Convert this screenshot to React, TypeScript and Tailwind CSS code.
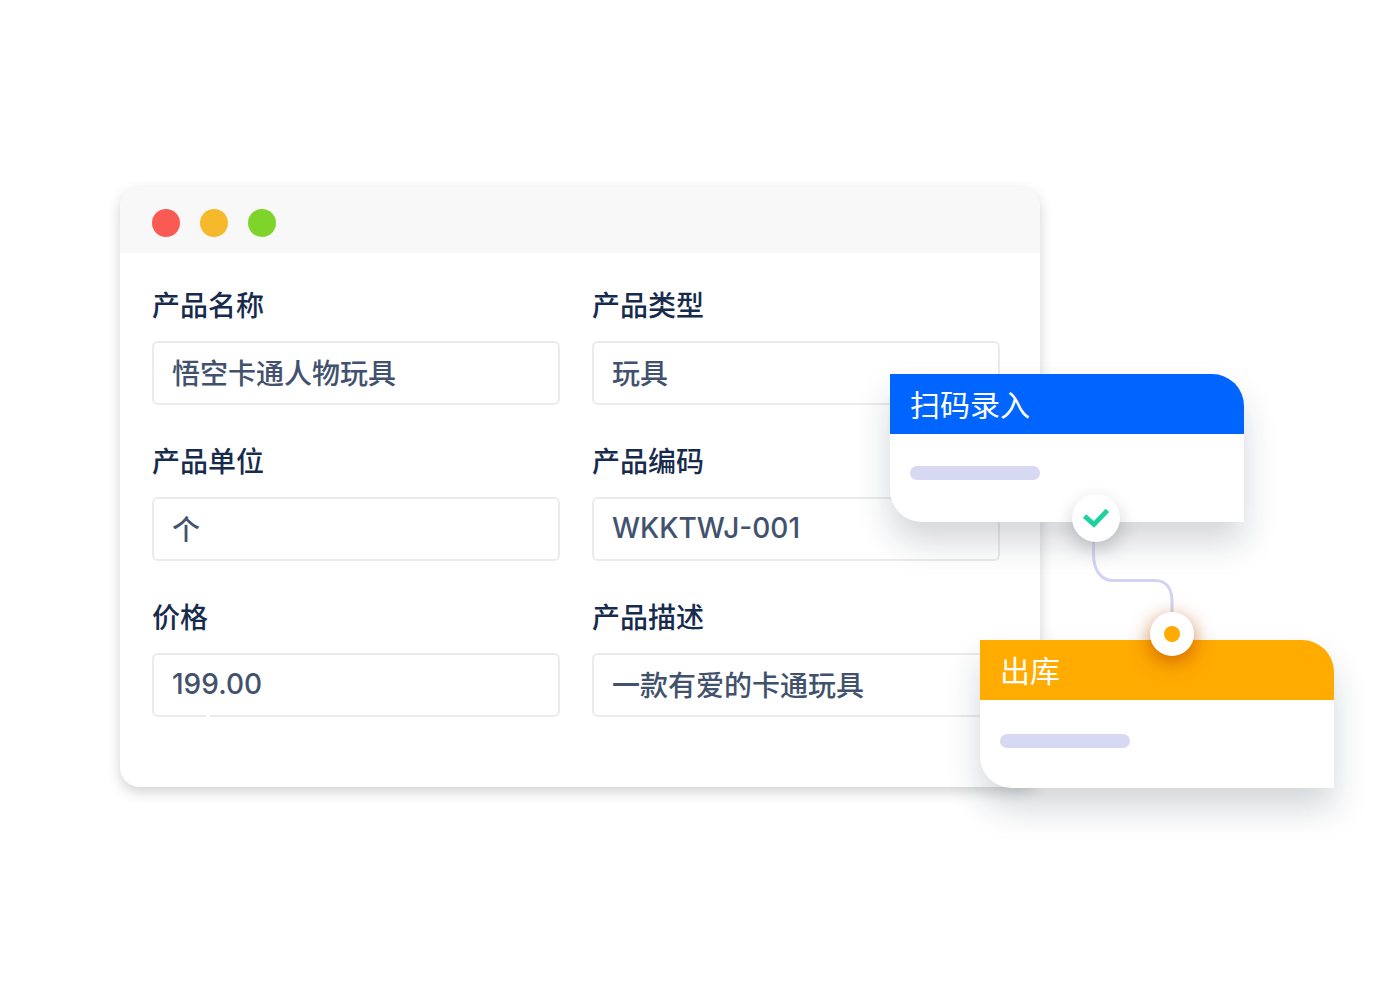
import React from 'react';

interface Field {
    id: string;
    label: string;
    value: string;
    notched?: boolean;
}

interface StepCardProps {
    title: string;
    headerClass: string;
    bodyClass: string;
    className?: string;
}

const fields: Field[] = [
    {id: 'name', label: '产品名称', value: '悟空卡通人物玩具'},
    {id: 'type', label: '产品类型', value: '玩具'},
    {id: 'unit', label: '产品单位', value: '个'},
    {id: 'code', label: '产品编码', value: 'WKKTWJ-001'},
    {id: 'price', label: '价格', value: '199.00', notched: true},
    {id: 'desc', label: '产品描述', value: '一款有爱的卡通玩具'},
];

const FormField: React.FC<{ field: Field }> = ({field}) => (
    <div className="relative flex flex-col gap-[14px]">
        <label htmlFor={field.id} className="text-[28px] leading-[42px] font-medium text-[#172b4d]">
            {field.label}
        </label>
        <input
            id={field.id}
            type="text"
            defaultValue={field.value}
            className="h-16 w-full rounded-md border-2 border-[#ebebeb] bg-white px-[18px] pb-[2px] text-[28px] font-medium text-[#42526e] outline-none"
        />
        {/* small gap in the bottom border */}
        {field.notched && <span className="absolute bottom-0 left-[54px] h-1 w-1 bg-white"/>}
    </div>
);

const StepCard: React.FC<StepCardProps> = ({title, headerClass, bodyClass, className = ''}) => (
    <div
        className={`h-[148px] w-[354px] overflow-hidden rounded-tr-[32px] rounded-bl-[32px] bg-white shadow-[0_20px_34px_rgba(9,35,52,0.18)] ${className}`}
    >
        <h2 className={`flex h-[60px] items-center px-5 pt-[2px] text-[30px] font-normal text-white ${headerClass}`}>
            {title}
        </h2>
        <div className={`px-5 ${bodyClass}`}>
            <div className="h-[14px] w-[130px] rounded-full bg-[#d7d8f2]"/>
        </div>
    </div>
);

const App: React.FC = () => {
    return (
        <main className="overflow-hidden bg-white pt-[187px] pr-[360px] pb-[213px] pl-[120px] font-['Inter','Noto_Sans_CJK_SC',sans-serif]">
            <div className="relative">
                <section className="overflow-hidden rounded-[20px] bg-white shadow-[0_5px_14px_rgba(0,0,0,0.18)]">
                    <header className="flex h-[66px] items-center gap-5 bg-[#f8f8f8] px-8 pt-[6px]">
                        <span className="h-7 w-7 rounded-full bg-[#fa5a54]"/>
                        <span className="h-7 w-7 rounded-full bg-[#f7b92c]"/>
                        <span className="h-7 w-7 rounded-full bg-[#7ed42a]"/>
                    </header>
                    <form className="grid grid-cols-2 gap-x-8 gap-y-9 pt-8 pr-10 pb-[70px] pl-8">
                        {fields.map((field) => (
                            <FormField key={field.id} field={field}/>
                        ))}
                    </form>
                </section>

                {/* Workflow steps floating over the form */}
                <div className="absolute top-[187px] right-[-294px] flex w-[444px] flex-col gap-[118px]">
                    <StepCard title="扫码录入" headerClass="bg-[#0065ff]" bodyClass="pt-8"/>
                    <StepCard
                        title="出库"
                        headerClass="bg-[#ffab00]"
                        bodyClass="pt-[34px]"
                        className="self-end"
                    />
                    <svg
                        className="absolute top-[160px] left-[190px]"
                        width="110"
                        height="90"
                        viewBox="0 0 110 90"
                        fill="none"
                    >
                        <path
                            d="M13.5 4V20C13.5 36 21 46.5 33 46.5H75C86 46.5 92 54 92 68V86"
                            stroke="#d2d3f2"
                            strokeWidth="3"
                        />
                    </svg>
                    <span className="absolute top-[120px] left-[182px] flex h-12 w-12 items-center justify-center rounded-full bg-white shadow-[0_8px_20px_rgba(0,0,0,0.2)]">
                        <svg width="28" height="20" viewBox="0 0 28 20" fill="none">
                            <path d="M2.6 8.1L12 16.4L25.4 2.4" stroke="#1dd1a1" strokeWidth="4.8"/>
                        </svg>
                    </span>
                    <span className="absolute top-[238px] left-[260px] flex h-11 w-11 items-center justify-center rounded-full bg-white shadow-[0_6px_20px_rgba(190,80,0,0.75)]">
                        <span className="h-4 w-4 rounded-full bg-[#ffab00]"/>
                    </span>
                </div>
            </div>
        </main>
    );
};

export default App;
